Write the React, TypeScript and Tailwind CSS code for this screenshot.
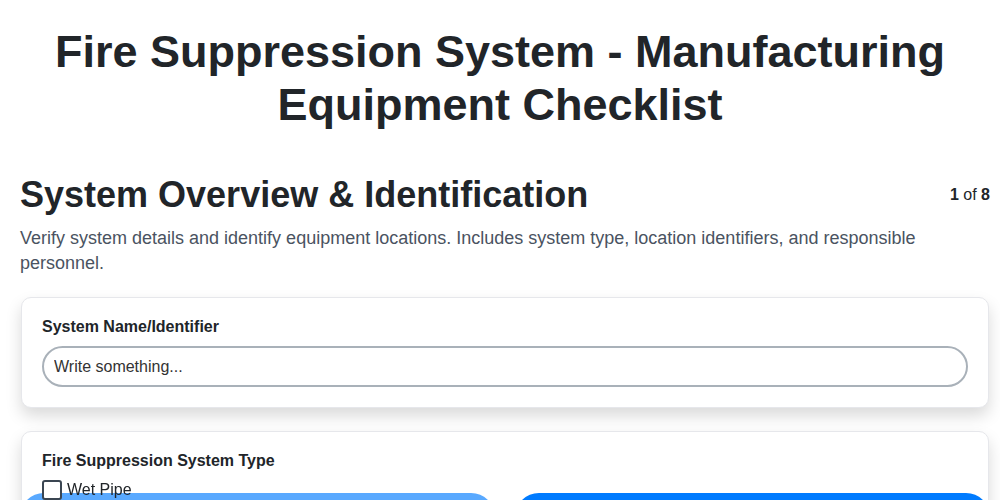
import React from "react";

export default function App() {
  return (
    <div className="min-h-[500px] bg-white text-[#212529]" style={{ fontFamily: '"Liberation Sans", Arial, sans-serif' }}>
      <div className="pt-[25px] pb-24">
        <h1 className="px-5 text-center text-[45px] font-bold leading-[53px] text-[#212529]">
          Fire Suppression System - Manufacturing
          <br />
          Equipment Checklist
        </h1>

        <div className="pl-5 pr-[10px]">
          <div className="mt-[42px] flex items-center justify-between">
            <h2 className="text-[36px] font-bold leading-[43px] text-[#212529]">
              System Overview &amp; Identification
            </h2>
            <div className="text-base leading-[18px] text-[#212529]">
              <span className="font-bold">1</span> of <span className="font-bold">8</span>
            </div>
          </div>

          <p className="mt-[10px] pr-[60px] text-[18px] leading-[25px] text-[#4a5361]">
            Verify system details and identify equipment locations. Includes system type, location identifiers, and responsible personnel.
          </p>

          <div className="mx-px mt-[21px] flex flex-col gap-[23px]">
            <div className="rounded-[10px] border border-[#e6e7eb] bg-white p-5 shadow-[0_8px_16px_rgba(0,0,0,0.15)]">
              <label className="block text-base font-bold leading-[18px] text-[#212529]">
                System Name/Identifier
              </label>
              <input
                type="text"
                placeholder="Write something..."
                className="mt-[10px] block h-[41px] w-full rounded-full border-2 border-[#a9b1b9] bg-white px-[10px] text-base text-[#333] placeholder:text-[#333] outline-none"
                style={{ fontFamily: '"Liberation Sans", Arial, sans-serif' }}
              />
            </div>

            <div className="rounded-[10px] border border-[#e6e7eb] bg-white p-5 shadow-[0_8px_16px_rgba(0,0,0,0.15)]">
              <label className="block text-base font-bold leading-[18px] text-[#212529]">
                Fire Suppression System Type
              </label>
              <div className="relative z-10 mt-[10px] flex items-center gap-[5px]">
                <span className="block h-[20px] w-[20px] rounded-[3px] border-2 border-[#3b4652] bg-white" />
                <span className="text-base leading-[20px] text-[#212529]">Wet Pipe</span>
              </div>
              <div className="h-16" />
            </div>
          </div>
        </div>
      </div>

      <div className="fixed left-0 right-0 top-[493px] grid grid-cols-2 gap-5 pl-5 pr-[10px]">
        <button aria-label="Previous" className="h-12 rounded-t-[24px] bg-[#59a9ff]" />
        <button aria-label="Next" className="h-12 rounded-t-[24px] bg-[#007bff]" />
      </div>
    </div>
  );
}
